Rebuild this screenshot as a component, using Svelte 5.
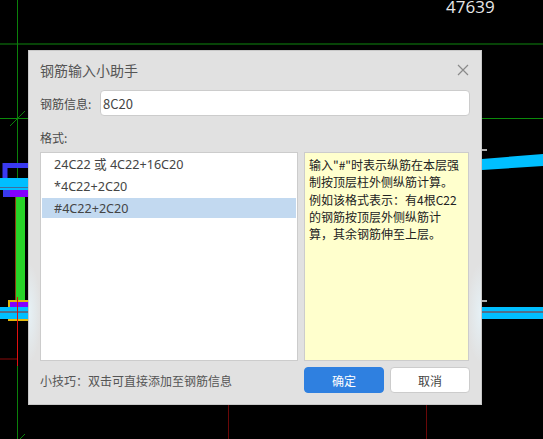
<script>
  const examples = ['24C22 或 4C22+16C20', '*4C22+2C20', '#4C22+2C20'];
  let selected = $state(2);
  let value = $state('8C20');
</script>

<div class="canvas">
  <svg class="drawing" width="543" height="439" viewBox="0 0 543 439">
    <path d="M0 44H543" stroke="#0a5a0a" stroke-width="1.5" />
    <path d="M0 118.5H543" stroke="#0b8a0b" />
    <path d="M17.5 0V300M17.5 366V439" stroke="#0b800b" />
    <path d="M10 126L25 111M20 439L25 434" stroke="#0b800b" />
    <path d="M5 178V165.500H28" fill="none" stroke="#3a3af0" stroke-width="5" />
    <rect x="3" y="190" width="7" height="7" fill="#3a3af0" />
    <rect x="10" y="190" width="18" height="7" fill="#8400ff" />
    <rect x="0" y="178" width="28" height="12" fill="#00bfff" />
    <rect x="0" y="187" width="28" height="1" fill="#3f6f9f" />
    <rect x="15" y="197" width="10" height="103" fill="#27d427" />
    <rect x="15" y="197" width="1" height="103" fill="#8a3a10" />
    <rect x="8" y="300" width="20" height="21" fill="#e2b80c" />
    <rect x="10" y="302" width="18" height="6" fill="#8400ff" />
    <rect x="0" y="307" width="28" height="12" fill="#00bfff" />
    <rect x="0" y="311" width="28" height="2" fill="#50708a" />
    <path d="M17.5 297V366" stroke="#e01010" />
    <path d="M0 359H17" stroke="#8a0a0a" />
    <path d="M228.500 405V439M426.500 405V439" stroke="#6a0808" />
    <path d="M482 159L543 154V166L482 170Z" fill="#00bfff" />
    <rect x="482" y="307" width="61" height="12" fill="#00bfff" />
    <rect x="482" y="311" width="61" height="2" fill="#50708a" />
    <rect x="482" y="300" width="5" height="2" fill="#b0b0b0" />
    <rect x="482" y="149" width="5" height="2" fill="#b0b0b0" />
  </svg>
  <div class="coord">47639</div>

  <div class="dialog">
    <div class="titlebar">
      <span class="title">钢筋输入小助手</span>
      <svg class="close" width="12" height="12" viewBox="0 0 12 12">
        <path d="M1 1L11 11M11 1L1 11" stroke="#8a8a8a" stroke-width="1.200" />
      </svg>
    </div>

    <div class="field">
      <label for="info">钢筋信息:</label>
      <input id="info" bind:value />
    </div>

    <div class="format-label">格式:</div>

    <div class="panes">
      <ul class="list">
        {#each examples as ex, i}
          <li class:active={i === selected}>
            <button onclick={() => (selected = i)}>{ex}</button>
          </li>
        {/each}
      </ul>
      <div class="hint">输入"#"时表示纵筋在本层强制按顶层柱外侧纵筋计算。例如该格式表示&#xFF1A;有4根C22的钢筋按顶层外侧纵筋计算&#xFF0C;其余钢筋伸至上层。</div>
    </div>

    <div class="footer">
      <span class="tip">小技巧&#xFF1A;双击可直接添加至钢筋信息</span>
      <div class="actions">
        <button class="btn primary">确定</button>
        <button class="btn">取消</button>
      </div>
    </div>
  </div>
</div>

<style>
  :global(body) {
    margin: 0;
    background: #000;
  }

  .canvas {
    position: relative;
    width: 543px;
    height: 439px;
    overflow: hidden;
    background: #000;
    font-family: "Noto Sans CJK SC", "Liberation Sans", sans-serif;
  }

  .drawing {
    position: absolute;
    left: 0;
    top: 0;
  }

  .coord {
    position: absolute;
    left: 446px;
    top: 0;
    color: #e8e8e8;
    font-family: "Open Sans", sans-serif;
    font-size: 17px;
    line-height: 14px;
  }

  .dialog {
    position: absolute;
    left: 28px;
    top: 50px;
    width: 454px;
    height: 355px;
    box-sizing: border-box;
    padding: 0 11px;
    display: flex;
    flex-direction: column;
    background:
      radial-gradient(ellipse 12px 50px at 0 262px, #e6f1f6, transparent),
      radial-gradient(ellipse 14px 50px at 100% 262px, #e6f1f6, transparent),
      #e1e1e1;
    border: 1px solid #c8c8c8;
    color: #4a4a4a;
    font-size: 12px;
  }

  .titlebar {
    display: flex;
    justify-content: space-between;
    align-items: center;
    height: 38px;
    flex: none;
    margin-bottom: 1px;
  }

  .title {
    font-size: 14px;
    color: #555;
  }

  .close {
    margin-right: 1px;
  }

  .field {
    display: flex;
    align-items: center;
    height: 26px;
    flex: none;
  }

  .field label {
    width: 60px;
    flex: none;
    white-space: nowrap;
  }

  .field input {
    flex: 1;
    min-width: 0;
    height: 26px;
    box-sizing: border-box;
    padding: 0 2px;
    border: 1px solid #ccc;
    border-radius: 4px;
    background: #fff;
    color: #444;
    font: inherit;
    font-size: 13px;
    outline: none;
  }

  .format-label {
    margin-top: 12px;
    height: 20px;
    line-height: 20px;
    flex: none;
  }

  .panes {
    display: flex;
    gap: 6px;
    margin-top: 4px;
    margin-right: 1px;
    height: 209px;
    flex: none;
  }

  .list {
    list-style: none;
    margin: 0;
    padding: 1px;
    width: 258px;
    flex: none;
    box-sizing: border-box;
    background: #fff;
    border: 1px solid #ccc;
  }

  .list li {
    height: 22px;
  }

  .list button {
    display: block;
    width: 100%;
    height: 20px;
    margin: 0;
    padding: 1px 0 0 12px;
    border: 0;
    background: transparent;
    color: #444;
    font-family: "Noto Sans", "Noto Sans CJK SC", sans-serif;
    font-size: 12.600px;
    line-height: 19px;
    text-align: left;
  }

  .list li.active button {
    background: #c2d9f0;
  }

  .hint {
    flex: 1;
    padding: 3px 4px;
    background: #ffffcd;
    border: 1px solid #ccc;
    color: #222;
    font-size: 12px;
    line-height: 17.300px;
  }

  .footer {
    display: flex;
    justify-content: space-between;
    align-items: center;
    margin-top: 6px;
    height: 26px;
    flex: none;
  }

  .tip {
    color: #555;
    font-size: 12px;
  }

  .actions {
    display: flex;
    gap: 6px;
  }

  .btn {
    width: 80px;
    height: 26px;
    box-sizing: border-box;
    padding: 0;
    border: 1px solid #ccc;
    border-radius: 4px;
    background: #fff;
    color: #444;
    font: inherit;
    font-size: 12px;
  }

  .btn.primary {
    border-color: #2f80e0;
    background: #2f80e0;
    color: #fff;
  }
</style>
